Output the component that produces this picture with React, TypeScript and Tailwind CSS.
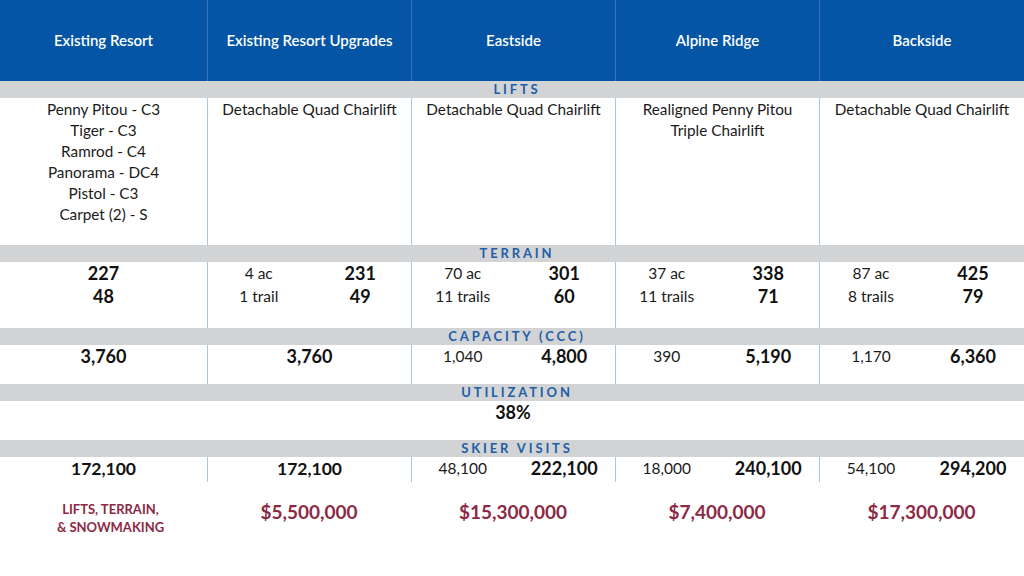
import React from "react";

const COLS = "grid grid-cols-[207px_204px_204px_204px_1fr]";

function Band({ label }: { label: string }) {
  return (
    <div className="h-[17px] bg-[#d1d3d4] flex items-center justify-center pl-[10px]">
      <span className="text-[13px] leading-none font-bold tracking-[0.22em] text-[#1f5ea8]">{label}</span>
    </div>
  );
}

function Split({ left, right }: { left: string[]; right: string[] }) {
  return (
    <div className="grid grid-cols-2">
      <div className="flex flex-col items-center text-[15.5px] leading-[23px] text-[#1a1a1a]">
        {left.map((t) => (
          <span key={t}>{t}</span>
        ))}
      </div>
      <div className="flex flex-col items-center text-[18px] leading-[23px] font-bold text-[#111]">
        {right.map((t) => (
          <span key={t}>{t}</span>
        ))}
      </div>
    </div>
  );
}

const divider = "border-l border-[#a9c8dd]";

export default function App() {
  const headers = ["Existing Resort", "Existing Resort Upgrades", "Eastside", "Alpine Ridge", "Backside"];
  return (
    <div className="w-[1024px] h-[576px] bg-white overflow-hidden" style={{ fontFamily: "Lato, 'Noto Sans', sans-serif" }}>
      {/* header */}
      <div className={`${COLS} h-[81px] bg-[#0455a6]`}>
        {headers.map((h, i) => (
          <div
            key={h}
            className={`flex items-center justify-center text-white text-[15px] font-semibold ${i > 0 ? "border-l border-[#3a74b9]" : ""}`}
          >
            {h}
          </div>
        ))}
      </div>

      <Band label="LIFTS" />
      <div className={`${COLS} h-[147px] text-[15.3px] leading-[21px] text-[#1a1a1a]`}>
        <div className="flex flex-col items-center pt-px">
          <span>Penny Pitou - C3</span>
          <span>Tiger - C3</span>
          <span>Ramrod - C4</span>
          <span>Panorama - DC4</span>
          <span>Pistol - C3</span>
          <span>Carpet (2) - S</span>
        </div>
        <div className={`${divider} flex flex-col items-center pt-px`}>
          <span>Detachable Quad Chairlift</span>
        </div>
        <div className={`${divider} flex flex-col items-center pt-px`}>
          <span>Detachable Quad Chairlift</span>
        </div>
        <div className={`${divider} flex flex-col items-center pt-px`}>
          <span>Realigned Penny Pitou</span>
          <span>Triple Chairlift</span>
        </div>
        <div className={`${divider} flex flex-col items-center pt-px`}>
          <span>Detachable Quad Chairlift</span>
        </div>
      </div>

      <Band label="TERRAIN" />
      <div className={`${COLS} h-[66px]`}>
        <div className="flex flex-col items-center text-[18px] leading-[23px] font-bold text-[#111]">
          <span>227</span>
          <span>48</span>
        </div>
        <div className={divider}>
          <Split left={["4 ac", "1 trail"]} right={["231", "49"]} />
        </div>
        <div className={divider}>
          <Split left={["70 ac", "11 trails"]} right={["301", "60"]} />
        </div>
        <div className={divider}>
          <Split left={["37 ac", "11 trails"]} right={["338", "71"]} />
        </div>
        <div className={divider}>
          <Split left={["87 ac", "8 trails"]} right={["425", "79"]} />
        </div>
      </div>

      <Band label="CAPACITY (CCC)" />
      <div className={`${COLS} h-[39px]`}>
        <div className="flex justify-center text-[18px] leading-[23px] font-bold text-[#111]">3,760</div>
        <div className={`${divider} flex justify-center text-[18px] leading-[23px] font-bold text-[#111]`}>3,760</div>
        <div className={divider}>
          <Split left={["1,040"]} right={["4,800"]} />
        </div>
        <div className={divider}>
          <Split left={["390"]} right={["5,190"]} />
        </div>
        <div className={divider}>
          <Split left={["1,170"]} right={["6,360"]} />
        </div>
      </div>

      <Band label="UTILIZATION" />
      <div className={`${COLS} h-[39px]`}>
        <div />
        <div />
        <div className="flex justify-center text-[18px] leading-[23px] font-bold text-[#111]">38%</div>
        <div />
        <div />
      </div>

      <Band label="SKIER VISITS" />
      <div className={`${COLS} h-[25px]`}>
        <div className="flex justify-center text-[17.5px] leading-[23px] font-bold text-[#111]">172,100</div>
        <div className={`${divider} flex justify-center text-[17.5px] leading-[23px] font-bold text-[#111]`}>172,100</div>
        <div className={divider}>
          <Split left={["48,100"]} right={["222,100"]} />
        </div>
        <div className={divider}>
          <Split left={["18,000"]} right={["240,100"]} />
        </div>
        <div className={divider}>
          <Split left={["54,100"]} right={["294,200"]} />
        </div>
      </div>

      <div className={`${COLS} pt-[18px] text-[#8c2945] font-bold`}>
        <div className="flex flex-col items-center pl-[14px] text-[13px] leading-[18px]">
          <span>LIFTS, TERRAIN,</span>
          <span>&amp; SNOWMAKING</span>
        </div>
        <div className="flex justify-center text-[19px] leading-[24px]">$5,500,000</div>
        <div className="flex justify-center text-[19px] leading-[24px]">$15,300,000</div>
        <div className="flex justify-center text-[19px] leading-[24px]">$7,400,000</div>
        <div className="flex justify-center text-[19px] leading-[24px]">$17,300,000</div>
      </div>
    </div>
  );
}
